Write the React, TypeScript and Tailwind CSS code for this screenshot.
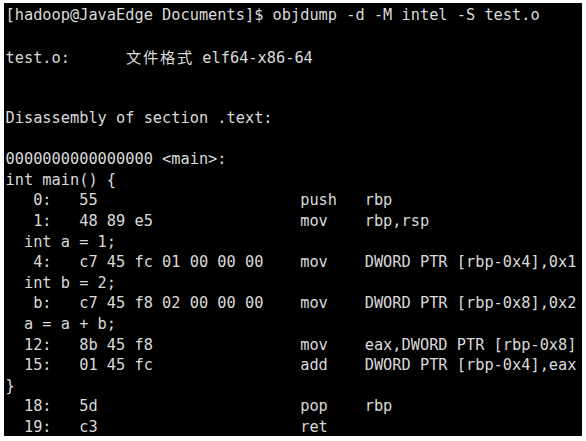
const pad = (s: string, n: number) => s + ' '.repeat(Math.max(0, n - s.length));

const asm = (addr: string, bytes: string, op: string, args = '') =>
  pad(pad(addr.padStart(4) + ':', 8) + bytes, 32) + (args ? pad(op, 7) + args : op);

const lines: string[] = [
  '[hadoop@JavaEdge Documents]$ objdump -d -M intel -S test.o',
  '',
  '__CJK__',
  '',
  '',
  'Disassembly of section .text:',
  '',
  '0000000000000000 <main>:',
  'int main() {',
  asm('0', '55', 'push', 'rbp'),
  asm('1', '48 89 e5', 'mov', 'rbp,rsp'),
  '  int a = 1;',
  asm('4', 'c7 45 fc 01 00 00 00', 'mov', 'DWORD PTR [rbp-0x4],0x1'),
  '  int b = 2;',
  asm('b', 'c7 45 f8 02 00 00 00', 'mov', 'DWORD PTR [rbp-0x8],0x2'),
  '  a = a + b;',
  asm('12', '8b 45 f8', 'mov', 'eax,DWORD PTR [rbp-0x8]'),
  asm('15', '01 45 fc', 'add', 'DWORD PTR [rbp-0x4],eax'),
  '}',
  asm('18', '5d', 'pop', 'rbp'),
  asm('19', 'c3', 'ret'),
];

export default function App() {
  return (
    <div className="w-[586px] h-[441px] bg-white pl-[4px] pt-[3px] pr-[4px] pb-[5px]">
      <div
        className="h-full bg-black text-[#dadada] text-[15.3px] leading-[20.6px] pl-[1.5px] pt-[2px] whitespace-pre overflow-hidden"
        style={{ fontFamily: '"DejaVu Sans Mono", "Liberation Mono", monospace' }}
      >
        {lines.map((l, i) =>
          l === '__CJK__' ? (
            <div key={i} className="h-[20.6px]">
              {'test.o:      '}
              {['文', '件', '格', '式'].map((c) => (
                <span
                  key={c}
                  className="inline-block w-[2ch] text-center"
                  style={{ fontFamily: '"Noto Sans CJK SC", sans-serif' }}
                >
                  {c}
                </span>
              ))}
              {' elf64-x86-64'}
            </div>
          ) : (
            <div key={i} className="h-[20.6px]">
              {l}
            </div>
          )
        )}
      </div>
    </div>
  );
}
